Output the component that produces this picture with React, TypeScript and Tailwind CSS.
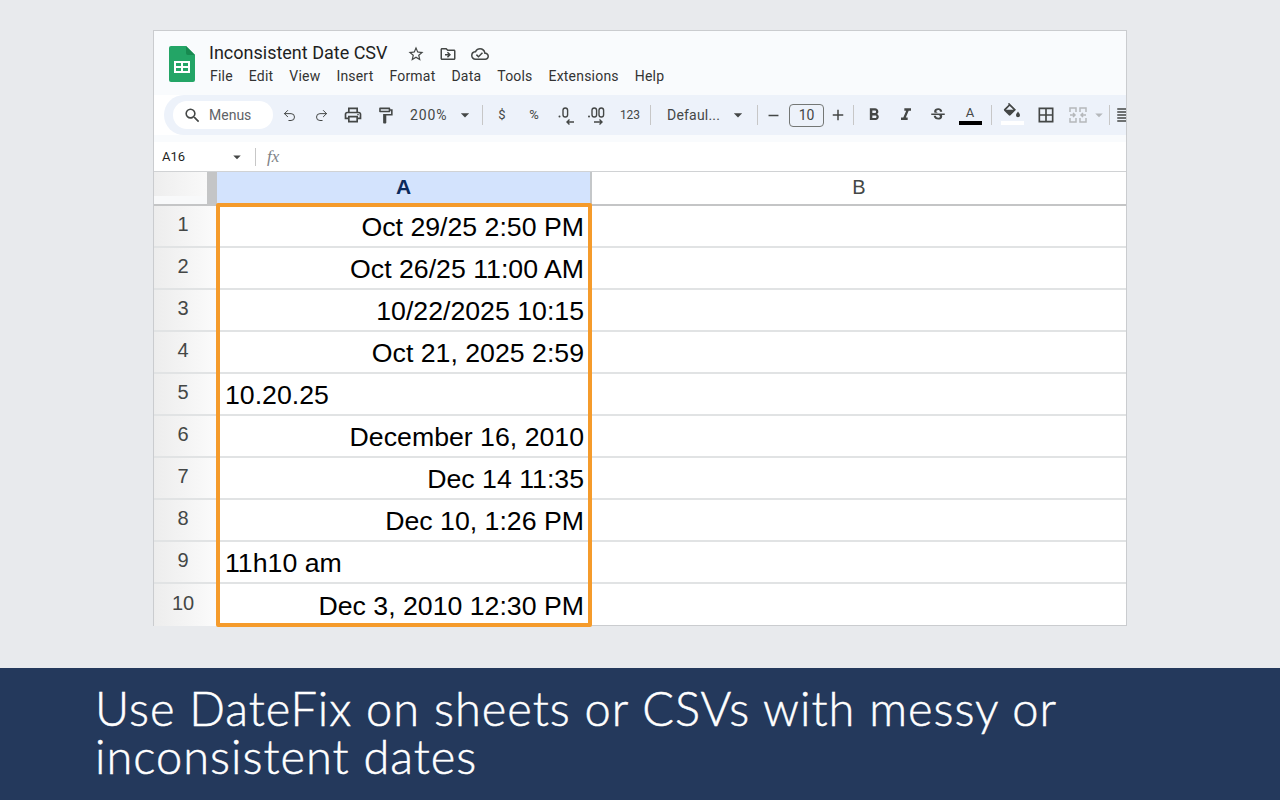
import { Redo2, Undo2 } from "lucide-react";
import {
  MdAdd,
  MdArrowDropDown,
  MdBorderAll,
  MdFormatAlignLeft,
  MdFormatBold,
  MdFormatItalic,
  MdOutlineCloudDone,
  MdOutlineDriveFileMove,
  MdOutlineFormatPaint,
  MdOutlinePrint,
  MdRemove,
  MdSearch,
  MdStarBorder,
  MdStrikethroughS,
} from "react-icons/md";

const menus = ["File", "Edit", "View", "Insert", "Format", "Data", "Tools", "Extensions", "Help"];

const rows = [
  { text: "Oct 29/25 2:50 PM", right: true },
  { text: "Oct 26/25 11:00 AM", right: true },
  { text: "10/22/2025 10:15", right: true },
  { text: "Oct 21, 2025 2:59", right: true },
  { text: "10.20.25", right: false },
  { text: "December 16, 2010", right: true },
  { text: "Dec 14 11:35", right: true },
  { text: "Dec 10, 1:26 PM", right: true },
  { text: "11h10 am", right: false },
  { text: "Dec 3, 2010 12:30 PM", right: true },
];

const Slot = ({ children }: { children: React.ReactNode }) => (
  <div className="w-[32px] h-[28px] flex items-center justify-center shrink-0 text-[#444746]">{children}</div>
);

const Sep = () => <div className="w-px h-[20px] bg-[#c7c7c7] shrink-0" />;

const SheetsLogo = () => (
  <svg width="26" height="36" viewBox="0 0 26 36">
    <path d="M2 0H17L26 9V34a2 2 0 0 1-2 2H2a2 2 0 0 1-2-2V2a2 2 0 0 1 2-2Z" fill="#23a566" />
    <path d="M17 0L26 9H19a2 2 0 0 1-2-2Z" fill="#178a50" />
    <path d="M5 15H21V27H5ZM7 17V20H12V17ZM14 17V20H19V17ZM7 22V25H12V22ZM14 22V25H19V22Z" fill="#fff" fillRule="evenodd" />
  </svg>
);

const DecreaseDecimal = () => (
  <svg width="24" height="24" viewBox="0 0 24 24" fill="none" stroke="#444746">
    <circle cx="5.5" cy="13.5" r="1" fill="#444746" stroke="none" />
    <rect x="9" y="5" width="4.6" height="9" rx="2.3" strokeWidth="1.4" />
    <path d="M20 19H13M15.5 16.5L13 19L15.5 21.5" strokeWidth="1.4" />
  </svg>
);

const IncreaseDecimal = () => (
  <svg width="24" height="24" viewBox="0 0 24 24" fill="none" stroke="#444746">
    <circle cx="3" cy="13.5" r="1" fill="#444746" stroke="none" />
    <rect x="6" y="5" width="4.6" height="9" rx="2.3" strokeWidth="1.4" />
    <rect x="13" y="5" width="4.6" height="9" rx="2.3" strokeWidth="1.4" />
    <path d="M8 19H16M13.5 16.5L16 19L13.5 21.5" strokeWidth="1.4" />
  </svg>
);

const MergeIcon = () => (
  <svg width="18" height="18" viewBox="0 0 18 18" fill="none" stroke="#b5b8bb" strokeWidth="1.5">
    <path d="M1 6V2H7V6M11 6V2H17V6M1 12V16H7V12M11 12V16H17V12" />
    <path d="M1 9H6M4 7L6 9L4 11M17 9H12M14 7L12 9L14 11" />
  </svg>
);

const FillIcon = () => (
  <svg width="18" height="15" viewBox="0 0 18 15">
    <path d="M5 0.5L6.2 0L13 6.8L7.5 12.3a1.2 1.2 0 0 1-1.7 0L1.2 7.7a1.2 1.2 0 0 1 0-1.7L5.6 1.8ZM6.7 3L3 6.8H10.5Z" fill="#444746" fillRule="evenodd" />
    <path d="M15 8.5C16.2 10.2 17 11.2 17 12.2a2 2 0 0 1-4 0C13 11.2 13.8 10.2 15 8.5Z" fill="#444746" />
  </svg>
);

export default function App() {
  return (
    <div className="w-[1280px] h-[800px] flex flex-col bg-[#e8eaed] overflow-hidden font-['Roboto',sans-serif]">
      <div className="h-[668px] shrink-0 pt-[30px] pl-[153px]">
        <div className="relative w-[974px] h-[596px] border border-[#cacccf] bg-white flex flex-col">
          {/* Title and menu */}
          <div className="h-[64px] bg-[#f9fbfd] flex shrink-0">
            <div className="pl-[15px] pt-[15px] w-[55px] shrink-0">
              <SheetsLogo />
            </div>
            <div className="flex flex-col pt-[8px]">
              <div className="flex items-center h-[26px]">
                <span className="text-[18px] text-[#1f1f1f] w-[179px] whitespace-nowrap">Inconsistent Date CSV</span>
                <div className="flex items-center ml-[19px] mt-[3px] gap-[14px] text-[#444746]">
                  <MdStarBorder size={18} />
                  <MdOutlineDriveFileMove size={18} />
                  <MdOutlineCloudDone size={18} />
                </div>
              </div>
              <div className="flex gap-[16px] mt-px text-[14px] text-[#333] pl-px tracking-[0.2px]">
                {menus.map((m) => (
                  <span key={m}>{m}</span>
                ))}
              </div>
            </div>
          </div>

          {/* Toolbar */}
          <div className="h-[40px] ml-[10px] bg-[#edf2fa] rounded-l-[20px] flex items-center pl-[9px] shrink-0 overflow-hidden">
            <div className="w-[100px] h-[28px] bg-white rounded-[14px] flex items-center pl-[10px] shrink-0">
              <MdSearch size={19} className="text-[#444746]" />
              <span className="ml-[7px] text-[14px] text-[#5f6368]">Menus</span>
            </div>
            <Slot><Undo2 size={15} strokeWidth={1.6} /></Slot>
            <Slot><Redo2 size={15} strokeWidth={1.6} /></Slot>
            <Slot><MdOutlinePrint size={20} /></Slot>
            <Slot><MdOutlineFormatPaint size={19} /></Slot>
            <div className="w-[74px] flex items-center pl-[9px] text-[14px] text-[#444746] shrink-0">
              <span className="w-[45px] tracking-[0.9px]">200%</span>
              <MdArrowDropDown size={20} />
            </div>
            <div className="w-[7px] shrink-0" />
            <Sep />
            <div className="w-[3px] shrink-0" />
            <Slot><span className="text-[13px]">$</span></Slot>
            <Slot><span className="text-[13px]">%</span></Slot>
            <Slot><DecreaseDecimal /></Slot>
            <Slot><IncreaseDecimal /></Slot>
            <Slot><span className="text-[12px]">123</span></Slot>
            <div className="w-[4px] shrink-0" />
            <Sep />
            <div className="w-[16px] shrink-0" />
            <div className="w-[90px] flex items-center text-[14px] text-[#444746] shrink-0">
              <span className="w-[61px] tracking-[0.2px]">Defaul...</span>
              <MdArrowDropDown size={20} />
            </div>
            <Sep />
            <div className="w-[31px] flex justify-center text-[#444746] shrink-0"><MdRemove size={17} /></div>
            <div className="w-[35px] h-[23px] border border-[#747775] rounded-[4px] flex items-center justify-center text-[14px] text-[#444746] shrink-0">10</div>
            <div className="w-[28px] flex justify-center text-[#444746] shrink-0"><MdAdd size={18} /></div>
            <div className="w-px shrink-0" />
            <Sep />
            <div className="w-[4px] shrink-0" />
            <Slot><MdFormatBold size={20} /></Slot>
            <Slot><MdFormatItalic size={20} /></Slot>
            <Slot><MdStrikethroughS size={18} /></Slot>
            <Slot>
              <div className="flex flex-col items-center w-[23px]">
                <span className="text-[13px] leading-[15px]">A</span>
                <div className="w-[23px] h-[4px] bg-black mt-px" />
              </div>
            </Slot>
            <div className="w-[5px] shrink-0" />
            <Sep />
            <div className="w-[4px] shrink-0" />
            <Slot>
              <div className="flex flex-col items-center w-[23px] -mt-[3px]">
                <FillIcon />
                <div className="w-[23px] h-[4px] bg-white mt-[3px]" />
              </div>
            </Slot>
            <div className="w-[2px] shrink-0" />
            <Slot><MdBorderAll size={20} /></Slot>
            <Slot><MergeIcon /></Slot>
            <div className="w-[14px] flex justify-center -ml-[2px] text-[#b5b8bb] shrink-0"><MdArrowDropDown size={18} className="shrink-0" /></div>
            <div className="w-[3px] shrink-0" />
            <Sep />
            <div className="w-[5px] shrink-0" />
            <MdFormatAlignLeft size={18} className="text-[#444746] shrink-0" />
          </div>
          <div className="h-[7px] bg-[#f9fbfd] shrink-0" />

          {/* Formula bar */}
          <div className="h-[29px] flex items-center shrink-0 bg-white">
            <span className="pl-[8px] w-[75px] text-[13px] text-[#1f1f1f]">A16</span>
            <MdArrowDropDown size={18} className="text-[#444746] -ml-[1px]" />
            <div className="w-px h-[18px] bg-[#c7c7c7] ml-[9px]" />
            <span className="ml-[11px] text-[17px] italic text-[#7d8287] font-['Liberation_Serif',serif]">fx</span>
          </div>

          {/* Column headers */}
          <div className="flex h-[33px] border-t border-[#d0d2d4] shrink-0">
            <div className="w-[63px] shrink-0 bg-[#f8f9fa] flex">
              <div className="w-[53px] h-[24px] bg-gradient-to-r from-[#eeeeee] to-[#f9f9f9]" />
              <div className="w-[10px] h-full bg-[#c4c5c6]" />
            </div>
            <div className="w-[375px] shrink-0 bg-[#d3e3fd] border-r-2 border-[#c4c7c9] flex items-center justify-center pb-[3px] font-['Liberation_Sans',sans-serif] font-bold text-[21px] text-[#0b2a5c]">A</div>
            <div className="flex-1 flex items-center justify-center pb-[3px] font-['Liberation_Sans',sans-serif] text-[20px] text-[#444746]">B</div>
          </div>
          <div className="flex h-[2px] shrink-0 bg-[#c4c5c6]" />

          {/* Rows */}
          <div className="flex-1 font-['Liberation_Sans',sans-serif]">
            {rows.map((r, i) => (
              <div key={r.text} className="flex h-[42px] border-b-2 border-[#e1e3e4] last:border-b-0">
                <div className="w-[63px] shrink-0 bg-gradient-to-r from-[#ededed] to-[#fbfbfb] flex items-center justify-center text-[20px] text-[#444746] pb-[4px] pr-[5px]">
                  {i + 1}
                </div>
                <div className={`w-[375px] shrink-0 border-r-2 border-[#e1e3e4] flex items-center pl-[8px] pr-[6px] text-[26.7px] text-black pt-[3px] ${r.right ? "justify-end" : "justify-start"}`}>
                  <span className="whitespace-nowrap">{r.text}</span>
                </div>
                <div className="flex-1" />
              </div>
            ))}
          </div>

          {/* Selection box */}
          <div className="absolute left-[62px] top-[172px] w-[376px] h-[424px] border-[4px] border-[#f59b2b] rounded-[2px]" />
        </div>
      </div>

      {/* Caption */}
      <div className="flex-1 bg-[#24395c] pl-[95px] pt-[16px] font-['Lato',sans-serif] font-light text-[47px] leading-[48px] text-white tracking-[1px] [-webkit-text-stroke:0.5px_white]">
        <div className="whitespace-nowrap">Use DateFix on sheets or CSVs with messy or</div>
        <div className="whitespace-nowrap">inconsistent dates</div>
      </div>
    </div>
  );
}
